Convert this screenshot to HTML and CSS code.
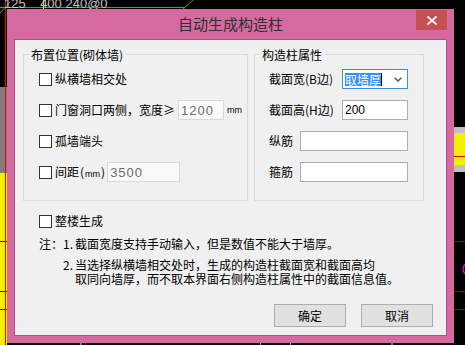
FILE: index.html
```html
<!DOCTYPE html>
<html lang="zh">
<head>
<meta charset="utf-8">
<title>自动生成构造柱</title>
<link rel="stylesheet" href="styles.css">
</head>
<body>
<div class="desktop">
  <svg class="cad" width="465" height="345" viewBox="0 0 465 345">
    <rect x="0" y="87" width="7" height="86" fill="#7f7f7f"/>
    <rect x="0" y="173" width="7" height="172" fill="#f2f200"/>
    <line x1="5.5" y1="0" x2="5.5" y2="345" stroke="#ff0000" stroke-width="1"/>
    <line x1="0" y1="241.5" x2="7" y2="241.5" stroke="#9b0000"/>
    <line x1="0" y1="291.5" x2="7" y2="291.5" stroke="#9b0000"/>
    <line x1="0" y1="309.5" x2="7" y2="309.5" stroke="#9b0000"/>
    <line x1="0" y1="7.5" x2="185" y2="7.5" stroke="#12c012"/>
    <line x1="0" y1="13" x2="10" y2="2" stroke="#12c012"/>
    <line x1="182" y1="10" x2="193" y2="0" stroke="#12c012"/>
    <line x1="43.5" y1="0" x2="43.5" y2="9" stroke="#e8e800"/>
    <rect x="454" y="127" width="11" height="6" fill="#c0c0c0"/>
    <rect x="454" y="133" width="11" height="32" fill="#f2f200"/>
    <line x1="454" y1="156.5" x2="465" y2="156.5" stroke="#e00000"/>
    <rect x="454" y="165" width="11" height="7" fill="#c0c0c0"/>
    <line x1="454" y1="241.5" x2="465" y2="241.5" stroke="#9b0000"/>
    <line x1="454" y1="291.5" x2="465" y2="291.5" stroke="#9b0000"/>
    <line x1="454" y1="309.5" x2="465" y2="309.5" stroke="#9b0000"/>
    <circle cx="469" cy="269" r="6" fill="none" stroke="#ff00ff" stroke-width="1.2"/>
    <rect x="80" y="343" width="2" height="2" fill="#12c012"/>
    <rect x="85" y="343" width="1" height="2" fill="#d00000"/>
    <rect x="260" y="343" width="1" height="2" fill="#00e0e0"/>
    <rect x="290" y="343" width="1" height="2" fill="#00e0e0"/>
    <rect x="391" y="343" width="2" height="2" fill="#12c012"/>
  </svg>
  <span class="cad-text">125    400 240@0</span>

  <div class="dialog">
    <div class="titlebar">
      <span class="title">自动生成构造柱</span>
      <button class="close" type="button" aria-label="关闭">
        <svg width="10" height="9" viewBox="0 0 10 9"><path d="M0.5 0.5 L9.5 8.5 M9.5 0.5 L0.5 8.5" stroke="#fff" stroke-width="1.7" fill="none"/></svg>
      </button>
    </div>

    <div class="client">
      <div class="groups">
        <fieldset class="group group-left">
          <legend>布置位置(砌体墙)</legend>
          <div class="rows">
            <div class="row"><span class="cb"></span><span>纵横墙相交处</span></div>
            <div class="row"><span class="cb"></span><span>门窗洞口两侧，宽度≥</span><input class="field dis w-1200" value="1200" disabled><span class="unit">mm</span></div>
            <div class="row"><span class="cb"></span><span>孤墙端头</span></div>
            <div class="row"><span class="cb"></span><span>间距</span><span class="paren">(<span class="unit-in">mm</span>)</span><input class="field dis w-3500" value="3500" disabled></div>
          </div>
        </fieldset>

        <fieldset class="group group-right">
          <legend>构造柱属性</legend>
          <div class="rows">
            <div class="row"><span class="flabel wide">截面宽(B边)</span>
              <div class="select"><span class="sel-text">取墙厚</span><span class="caret"></span>
                <svg class="chev" width="8" height="5" viewBox="0 0 8 5"><path d="M0.7 0.7 L4 4 L7.3 0.7" stroke="#555" stroke-width="1.5" fill="none"/></svg>
              </div>
            </div>
            <div class="row"><span class="flabel wide">截面高(H边)</span><input class="field w-short" value="200"></div>
            <div class="row"><span class="flabel narrow">纵筋</span><input class="field w-long" value=""></div>
            <div class="row"><span class="flabel narrow">箍筋</span><input class="field w-long" value=""></div>
          </div>
        </fieldset>
      </div>

      <div class="row whole"><span class="cb"></span><span>整楼生成</span></div>

      <div class="notes">
        <div class="note"><span class="n-head">注：</span><span class="n-num">1.</span><span>截面宽度支持手动输入，但是数值不能大于墙厚。</span></div>
        <div class="note note2"><span class="n-num">2.</span><span>当选择纵横墙相交处时，生成的构造柱截面宽和截面高均<br>取同向墙厚，而不取本界面右侧构造柱属性中的截面信息值。</span></div>
      </div>

      <div class="buttons">
        <button class="btn" type="button">确定</button>
        <button class="btn" type="button">取消</button>
      </div>
    </div>
  </div>
</div>
</body>
</html>
```

FILE: styles.css
```css
* { box-sizing: border-box; }
html, body { margin: 0; padding: 0; }
body {
  width: 465px;
  height: 345px;
  overflow: hidden;
  background: #000;
  font-family: "Noto Sans CJK SC", sans-serif;
  font-size: 12px;
  color: #000;
}
.desktop { position: relative; width: 465px; height: 345px; }
.cad { position: absolute; left: 0; top: 0; }
.cad-text {
  position: absolute;
  left: 4px;
  top: -3px;
  font: 13px/14px "Liberation Sans", sans-serif;
  color: #c4c4c4;
  white-space: pre;
}

.dialog {
  position: absolute;
  left: 7px;
  top: 9px;
  width: 447px;
  height: 334px;
  background: #d6699f;
  display: flex;
  flex-direction: column;
}
.titlebar {
  height: 30px;
  flex: none;
  display: grid;
  grid-template-columns: 1fr auto 1fr;
  padding: 1px 7px 0;
}
.title {
  grid-column: 2;
  align-self: center;
  font-size: 15px;
  line-height: 20px;
  color: #303030;
  margin-top: -1px;
}
.close {
  grid-column: 3;
  justify-self: end;
  align-self: start;
  width: 31px;
  height: 20px;
  border: 0;
  padding: 0;
  background: #c75050;
  display: flex;
  align-items: center;
  justify-content: center;
}

.client {
  flex: 1;
  margin: 0 7px 7px;
  border: 1px solid #b0507f;
  background: #f0f0f0;
  display: flex;
  flex-direction: column;
  padding: 6px 13px 8px 8px;
}
.groups { display: flex; gap: 6px; align-items: flex-start; }
fieldset.group {
  margin: 0;
  padding: 0;
  border: 1px solid #dcdcdc;
  min-width: 0;
}
.group-left { width: 225px; }
.group-right { width: 170px; }
.group legend {
  margin-left: 5px;
  padding: 0 2px;
  font-size: 12px;
  line-height: 17px;
}
.rows { display: flex; flex-direction: column; gap: 11px; }
.group-left .rows { padding: 6px 0 18px 15px; }
.group-right .rows { padding: 6px 15px 18px 14px; }

.row {
  display: flex;
  align-items: center;
  height: 20px;
  line-height: 20px;
  white-space: nowrap;
}
.cb {
  width: 13px;
  height: 13px;
  border: 1px solid #333;
  background: #fff;
  margin-right: 3px;
  flex: none;
}
.field {
  height: 20px;
  margin: 0;
  border: 1px solid #abadb3;
  background: #fff;
  padding: 0 2px;
  font: 12px/18px "Liberation Sans", sans-serif;
  color: #000;
  outline: none;
}
.field.dis {
  border-color: #d9d9d9;
  background: #f9f9f9;
  color: #6d6d6d;
  font-size: 13px;
  letter-spacing: 1px;
  -webkit-text-fill-color: #6d6d6d;
  opacity: 1;
}
.w-1200 { width: 46px; margin-left: 3px; }
.w-3500 { width: 73px; margin-left: 2px; }
.w-short { width: 66px; }
.w-long { width: 108px; }
.unit { font: 9px/20px "Liberation Sans", sans-serif; margin-left: 3px; }
.paren { margin-left: 1px; }
.unit-in { font: 9px "Liberation Sans", sans-serif; padding: 0 1px; }

.flabel { flex: none; }
.flabel.wide { width: 73px; }
.flabel.narrow { width: 31px; }
.select {
  width: 66px;
  height: 20px;
  border: 1px solid #3d8ee2;
  background: #fff;
  display: flex;
  align-items: center;
  padding-left: 2px;
}
.sel-text {
  background: #3390ff;
  color: #fff;
  height: 13px;
  line-height: 13px;
}
.caret { width: 1px; height: 13px; background: #000; }
.chev { margin-left: auto; margin-right: 5px; }

.whole { padding-left: 16px; margin-top: 10px; }
.notes { padding-left: 16px; margin-top: 6px; line-height: 14px; }
.note { display: flex; }
.n-head { width: 24px; flex: none; }
.n-num { width: 12px; flex: none; }
.note2 { padding-left: 24px; margin-top: 7px; }

.buttons {
  margin-top: auto;
  display: flex;
  justify-content: flex-end;
  gap: 15px;
}
.btn {
  width: 72px;
  height: 23px;
  margin: 0;
  padding: 0;
  border: 1px solid #adadad;
  background: #e1e1e1;
  font-family: "Noto Sans CJK SC", sans-serif;
  font-size: 12px;
  color: #000;
}
```
